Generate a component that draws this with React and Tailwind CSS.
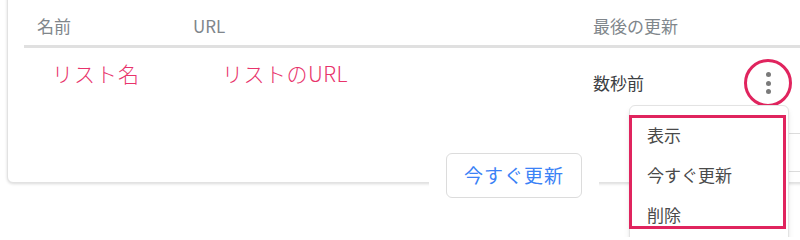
import React from 'react';

const jp = { fontFamily: '"Noto Sans CJK JP", "Noto Sans", sans-serif' };

function Dots() {
    return (
        <button className="w-12 h-12 rounded-full border-[3px] border-[#e0245e] flex flex-col items-center justify-center gap-[3.5px]">
            <span className="w-[5px] h-[5px] rounded-full bg-[#7a7a7a]" />
            <span className="w-[5px] h-[5px] rounded-full bg-[#7a7a7a]" />
            <span className="w-[5px] h-[5px] rounded-full bg-[#7a7a7a]" />
        </button>
    );
}

function Menu() {
    const items = ['表示', '今すぐ更新', '削除'];
    return (
        <div className="absolute left-[629px] top-[105px] w-[160px] h-[160px] bg-white border border-[#e3e3e3] rounded-md shadow-md pt-[9px] z-20">
            {items.map((item) => (
                <div key={item} className="h-[40px] flex items-center pl-[17px] text-[17px] text-[#4a4a4a]">
                    {item}
                </div>
            ))}
            {/* annotation box */}
            <div className="absolute left-[-1px] top-[9px] w-[157px] h-[114px] border-[3px] border-[#e0245e]" />
        </div>
    );
}

export default function App() {
    return (
        <div className="relative w-[800px] h-[237px] overflow-hidden bg-white" style={jp}>
            <div className="ml-[7px] -mt-[10px] w-[840px] h-[193px] bg-white border border-[#e2e2e2] rounded-md shadow-[0_1px_3px_rgba(0,0,0,0.15)] px-4">
                <div className="flex pt-[23px] pb-[7px] border-b-[3px] border-[#e0e0e0] text-[17px] leading-[24px] text-[#80868b]">
                    <div className="w-[156px] pl-[13px]">名前</div>
                    <div className="w-[400px] pl-[13px]">URL</div>
                    <div className="w-[160px] pl-[13px]">最後の更新</div>
                </div>
                <div className="flex items-center h-[70px]">
                    <div className="w-[156px] pl-[28px] self-start mt-[14px] text-[21px] leading-[22px] font-light tracking-[1px] text-[#e8336b]">リスト名</div>
                    <div className="w-[400px] pl-[42px] self-start mt-[14px] text-[21px] leading-[22px] font-light tracking-[0.5px] text-[#e8336b]">リストのURL</div>
                    <div className="w-[160px] pl-[13px] text-[17px] text-[#3c4043]">数秒前</div>
                    <div className="w-[56px] flex justify-center">
                        <Dots />
                    </div>
                </div>
            </div>

            <div className="absolute left-[429px] top-[140px] w-[170px] h-[70px] bg-white flex items-center justify-center">
                <button className="w-[136px] h-[45px] border border-[#dcdcdc] rounded-md text-[19px] tracking-[1px] text-[#3b82f6]">
                    今すぐ更新
                </button>
            </div>

            <div className="absolute left-[760px] top-[133px] w-[60px] h-[39px] bg-white border border-[#dcdcdc] rounded-md z-10" />

            <Menu />
        </div>
    );
}
